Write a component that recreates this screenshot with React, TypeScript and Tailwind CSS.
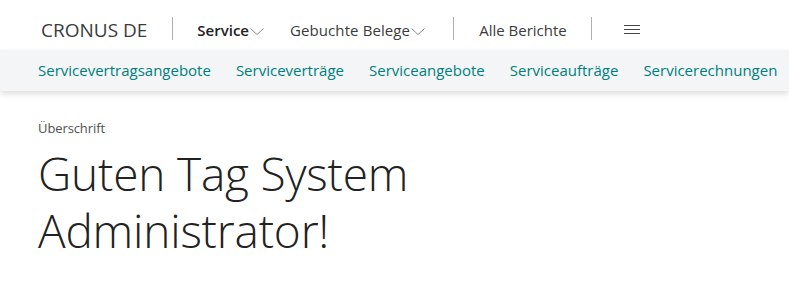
const subLinks = [
  'Servicevertragsangebote',
  'Serviceverträge',
  'Serviceangebote',
  'Serviceaufträge',
  'Servicerechnungen',
]

function Chevron() {
  return (
    <svg width="14" height="7" viewBox="0 0 14 7" className="ml-[1px] mt-[2px] text-[#8a8a8a]">
      <polyline points="0.5,0.5 7,6.5 13.5,0.5" fill="none" stroke="currentColor" strokeWidth="1" />
    </svg>
  )
}

export default function App() {
  return (
    <main className="w-[789px] h-[287px] bg-white overflow-hidden font-['Open_Sans','Noto_Sans',sans-serif]">
      {/* Top navigation */}
      <header className="h-[50px] flex items-center pl-[41px] pt-[11px] text-[#333]">
        <span className="text-[19px] text-[#3b3b3b]">CRONUS DE</span>
        <div className="w-px h-[23px] -mt-[5px] bg-[#b0b0b0] ml-[25px] mr-[24px]" />
        <span className="flex items-center text-[15px] font-semibold text-[#222]">
          Service
          <Chevron />
        </span>
        <span className="flex items-center text-[15px] ml-[26px] text-[#3b3b3b] tracking-[0.1px]">
          Gebuchte Belege
          <Chevron />
        </span>
        <div className="w-px h-[23px] -mt-[5px] bg-[#b0b0b0] ml-[28px] mr-[25px]" />
        <span className="text-[15px] text-[#3b3b3b]">Alle Berichte</span>
        <div className="w-px h-[23px] -mt-[5px] bg-[#b0b0b0] ml-[24px] mr-[32px]" />
        <svg width="16" height="10" viewBox="0 0 16 10" className="-mt-[2px] text-[#444]">
          <line x1="0" y1="0.5" x2="16" y2="0.5" stroke="currentColor" strokeWidth="1" />
          <line x1="0" y1="4.5" x2="16" y2="4.5" stroke="currentColor" strokeWidth="1" />
          <line x1="0" y1="8.5" x2="16" y2="8.5" stroke="currentColor" strokeWidth="1" />
        </svg>
      </header>

      {/* Sub navigation */}
      <nav className="h-[41px] bg-[#f3f5f7] flex items-center pl-[38px] gap-[25px] shadow-[0_3px_6px_rgba(0,0,0,0.13)]">
        {subLinks.map((l) => (
          <span key={l} className="text-[15px] text-[#00807c]">
            {l}
          </span>
        ))}
      </nav>

      {/* Content */}
      <section className="pl-[38px] pt-[28px]">
        <p className="text-[13px] text-[#505050] leading-[18px] tracking-[-0.1px]">Überschrift</p>
        <h1 className="mt-[8px] text-[46px] font-light leading-[57px] text-[#222] tracking-[-0.2px]">
          Guten Tag System
          <br />
          Administrator!
        </h1>
      </section>
    </main>
  )
}
